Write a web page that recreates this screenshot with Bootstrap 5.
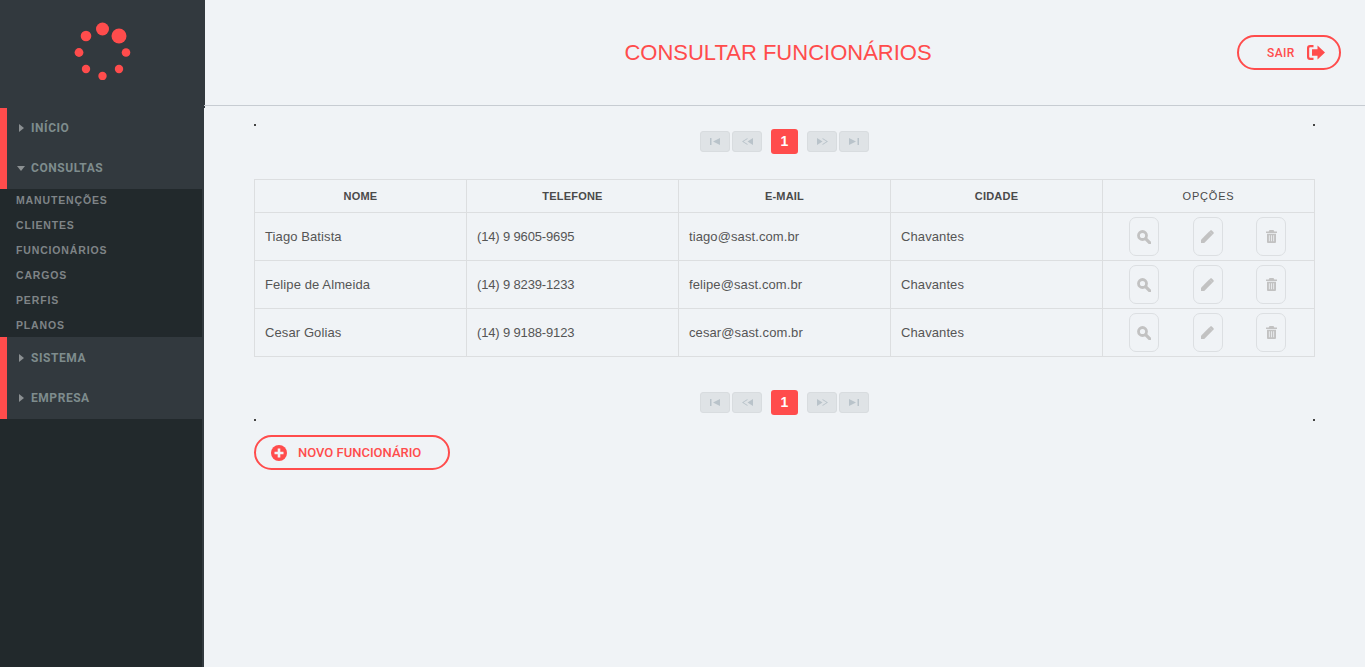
<!DOCTYPE html>
<html lang="pt-BR">
<head>
  <meta charset="UTF-8">
  <title>Consultar Funcionários</title>
  <link href="https://cdn.jsdelivr.net/npm/bootstrap@5.3.3/dist/css/bootstrap.min.css" rel="stylesheet">
  <style>
    body { background: #f0f3f6; font-family: "Liberation Sans", sans-serif; color: #555; overflow: hidden; }
    .app-side { width: 204px; min-height: 667px; background: #22292c; border-right: 2px solid #32393e; flex-shrink: 0; }
    .side-logo { width: 205px; height: 108px; background: #32393e; padding: 20px 0 0 73px; }
    .side-group { margin-right: -2px; padding: 0 0 1px; background: #32393e; border-left: 7px solid #ff4c4c; }
    .side-group:first-of-type { border-top-left-radius: 4px; }
    .side-group-low { padding: 1px 0; }
    .side-link { display: flex; align-items: center; height: 40px; padding-left: 12px; font-family: Roboto, sans-serif; font-size: 12px; font-weight: 700; letter-spacing: .55px; color: #7e8c8d; text-decoration: none; }
    .side-link i { display: block; width: 0; height: 0; margin-right: 7px; border-style: solid; border-width: 4px 0 4px 5px; border-color: transparent transparent transparent #8b9092; }
    .side-link i.is-open { border-width: 5px 4px 0 4px; margin-left: -2px; margin-right: 6px; border-color: #8b9092 transparent transparent transparent; }
    .side-sub { background: #22292c; margin: 0; padding: 0; list-style: none; }
    .side-sub li { height: 25px; line-height: 23px; padding-left: 16px; font-size: 10.5px; font-weight: 700; letter-spacing: .85px; color: #7f8487; }
    .side-sub li:last-child { height: 23px; }
    .top-head { height: 106px; padding-right: 24px; border-bottom: 1px solid #c7ccd2; }
    .top-title { padding: 2px 0 0 115px; font-size: 22px; font-weight: 400; color: #ff4c4c; margin: 0; }
    .pill-btn { --bs-btn-color: #ff4c4c; --bs-btn-hover-color: #ff4c4c; --bs-btn-border-color: #ff4c4c; --bs-btn-hover-border-color: #ff4c4c; --bs-btn-border-width: 2px; --bs-btn-border-radius: 18px; --bs-btn-font-family: Roboto, sans-serif; --bs-btn-font-size: 12px; --bs-btn-font-weight: 500; height: 35px; display: inline-flex; align-items: center; padding: 0; }
    .pill-out { width: 104px; padding-left: 28px; gap: 12px; letter-spacing: .4px; }
    .pill-new { --bs-btn-font-size: 13px; width: 196px; padding-left: 15px; gap: 11px; margin-top: 20px; }
    .list-wrap { padding: 23px 50px 0 50px; position: relative; }
    .corner-dot { position: absolute; width: 2px; height: 2px; background: #444; }
    .dot-a { left: 50px; top: 18px; }
    .dot-b { right: 50px; top: 18px; }
    .dot-c { left: 50px; top: 313px; }
    .dot-d { right: 50px; top: 313px; }
    .pager-row { height: 25px; gap: 2px; }
    .pg-btn { width: 30px; height: 21px; padding: 0; display: flex; align-items: center; justify-content: center; background: #dfe3e6; border: 1px solid #d8dcdf; border-radius: 3px; }
    .pg-now { width: 27px; height: 25px; margin: 0 7px; background: #ff4c4c; color: #fff; border-radius: 3px; font-size: 14px; font-weight: 700; text-align: center; line-height: 25px; }
    .staff-table { --bs-table-bg: transparent; --bs-table-border-color: #dcdee0; --bs-table-color: #555; table-layout: fixed; width: 1061px; margin: 25px 0 33px; font-size: 13px; letter-spacing: .1px; }
    .staff-table th { height: 33px; padding: 0; text-align: center; vertical-align: middle; font-size: 11px; font-weight: 700; letter-spacing: .2px; color: #4a4a4a; }
    .staff-table th.th-light { font-weight: 400; letter-spacing: .8px; }
    .staff-table td { height: 48px; padding: 0 10px; vertical-align: middle; }
    .staff-table td:nth-child(2) { letter-spacing: -.15px; }
    .staff-table td.opt-cell { padding: 0 0 0 26px; }
    .opt-gap { gap: 33.5px; }
    .opt-btn { width: 30px; height: 39px; display: flex; align-items: center; justify-content: center; border: 1px solid #dcdfe2; border-radius: 7px; background: transparent; padding: 0; }
  </style>
</head>
<body>
<div class="d-flex">
  <aside class="app-side">
    <div class="side-logo">
      <svg width="60" height="60" viewBox="73 20 60 60" fill="#ff4c4c">
        <circle cx="119" cy="36" r="7.5"/><circle cx="102.5" cy="29" r="6.5"/><circle cx="86" cy="36" r="5.3"/>
        <circle cx="79" cy="52.5" r="4.4"/><circle cx="86" cy="69" r="4.2"/><circle cx="102.5" cy="76" r="4.2"/>
        <circle cx="119" cy="69" r="4.2"/><circle cx="126" cy="52.5" r="4.3"/>
      </svg>
    </div>
    <div class="side-group">
      <a class="side-link" href="#"><i></i>INÍCIO</a>
      <a class="side-link" href="#"><i class="is-open"></i>CONSULTAS</a>
    </div>
    <ul class="side-sub">
      <li>MANUTENÇÕES</li><li>CLIENTES</li><li>FUNCIONÁRIOS</li><li>CARGOS</li><li>PERFIS</li><li>PLANOS</li>
    </ul>
    <div class="side-group side-group-low">
      <a class="side-link" href="#"><i></i>SISTEMA</a>
      <a class="side-link" href="#"><i></i>EMPRESA</a>
    </div>
  </aside>

  <main class="flex-grow-1">
    <header class="top-head d-flex align-items-center">
      <h1 class="top-title flex-grow-1 text-center">CONSULTAR FUNCIONÁRIOS</h1>
      <a class="btn pill-btn pill-out" href="#">SAIR
        <svg width="18" height="15" viewBox="0 0 18 15" fill="#ff4c4c"><path d="M6.5 0v2.200H3.200a1 1 0 0 0-1 1v8.600a1 1 0 0 0 1 1h3.300V15H3a3 3 0 0 1-3-3V3a3 3 0 0 1 3-3z"/><path d="M5 4.200h5.500V.5L18 7.500l-7.500 7v-3.700H5z"/></svg>
      </a>
    </header>

    <section class="list-wrap">
      <span class="corner-dot dot-a"></span>
      <span class="corner-dot dot-b"></span>
      <span class="corner-dot dot-c"></span>
      <span class="corner-dot dot-d"></span>

      <div id="pagerTop" class="pager-row d-flex justify-content-center align-items-center"></div>

      <table class="table table-bordered staff-table">
        <thead>
          <tr><th>NOME</th><th>TELEFONE</th><th>E-MAIL</th><th>CIDADE</th><th class="th-light">OPÇÕES</th></tr>
        </thead>
        <tbody id="staffRows"></tbody>
      </table>

      <div id="pagerBottom" class="pager-row d-flex justify-content-center align-items-center"></div>

      <a class="btn pill-btn pill-new" href="#">
        <svg width="16" height="16" viewBox="0 0 16 16"><circle cx="8" cy="8" r="8" fill="#ff4c4c"/><path d="M3.500 6.700h3.200V3.500h2.600v3.200h3.200v2.600H9.300v3.200H6.700V9.300H3.500z" fill="#f0f3f6"/></svg>
        NOVO FUNCIONÁRIO
      </a>
    </section>
  </main>
</div>

<script>
  const staff = [
    ['Tiago Batista', '(14) 9 9605-9695', 'tiago@sast.com.br', 'Chavantes'],
    ['Felipe de Almeida', '(14) 9 8239-1233', 'felipe@sast.com.br', 'Chavantes'],
    ['Cesar Golias', '(14) 9 9188-9123', 'cesar@sast.com.br', 'Chavantes']
  ];
  const searchIcon = '<svg width="14" height="14" viewBox="0 0 14 14"><circle cx="5.500" cy="5.500" r="4" fill="none" stroke="#c2c2c2" stroke-width="2.800"/><path d="M8.800 8.800l4 4" stroke="#c2c2c2" stroke-width="3.200" stroke-linecap="round"/></svg>';
  const pencilIcon = '<svg width="13" height="13" viewBox="0 0 14 14" fill="#c2c2c2"><path d="M0 14V10.500L8.800 1.700l3.500 3.500L3.500 14z"/><path d="M9.800.8c.7-.7 1.500-.7 2.100-.1l1.400 1.400c.6.6.6 1.400-.1 2.100l-.9.900-3.500-3.500z"/></svg>';
  const trashIcon = '<svg width="11" height="13" viewBox="0 0 11 13" fill="#c2c2c2"><path d="M3.500 0h4l.8 1.500H11V3H0V1.500h2.700z"/><path d="M1 3.800h9v7.900c0 .7-.5 1.300-1.200 1.300H2.200C1.500 13 1 12.400 1 11.700zm1.900 1.500v6h.8v-6zm2.200 0v6h.8v-6zm2.200 0v6h.8v-6z" fill-rule="evenodd"/></svg>';
  const rows = staff.map(s => `<tr>${s.map(v => `<td>${v}</td>`).join('')}<td class="opt-cell"><div class="d-flex opt-gap">
    <button class="opt-btn">${searchIcon}</button><button class="opt-btn">${pencilIcon}</button><button class="opt-btn">${trashIcon}</button></div></td></tr>`);
  document.getElementById('staffRows').innerHTML = rows.join('');

  // pager arrows
  const c = '#b9c3ca';
  const pgFirst = `<svg width="10" height="7" viewBox="0 0 10 7" fill="${c}"><path d="M0 0h1.500v7H0zM10 0v7L3 3.500z"/></svg>`;
  const pgPrev = `<svg width="11" height="7" viewBox="0 0 11 7" fill="${c}"><path d="M5.500 0v1L1.500 3.500l4 2.500v1L0 3.500zM11 0v7L5.500 3.500z"/></svg>`;
  const pgNext = `<svg width="11" height="7" viewBox="0 0 11 7" fill="${c}"><path d="M0 0v7l5.500-3.500zM5.500 0v1l4 2.500-4 2.500v1L11 3.500z"/></svg>`;
  const pgLast = `<svg width="10" height="7" viewBox="0 0 10 7" fill="${c}"><path d="M10 0H8.500v7H10zM0 0v7l7-3.500z"/></svg>`;
  const pager = `<span class="pg-btn">${pgFirst}</span><span class="pg-btn">${pgPrev}</span><span class="pg-now">1</span><span class="pg-btn">${pgNext}</span><span class="pg-btn">${pgLast}</span>`;
  document.getElementById('pagerTop').innerHTML = pager;
  document.getElementById('pagerBottom').innerHTML = pager;
</script>
</body>
</html>
